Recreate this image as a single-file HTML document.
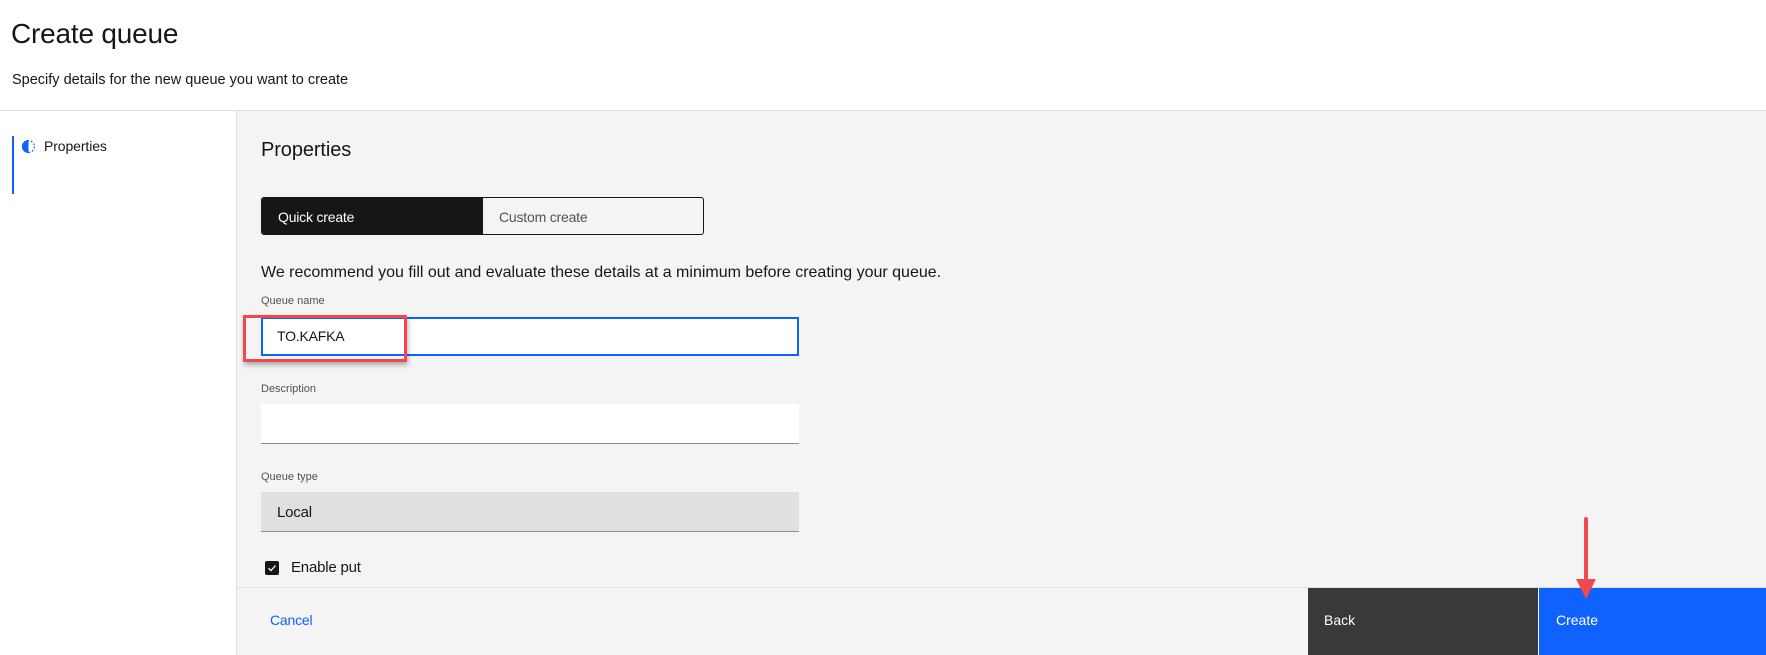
<!DOCTYPE html>
<html><head><meta charset="utf-8"><style>
*{box-sizing:border-box;margin:0;padding:0}
body{width:1766px;height:655px;overflow:hidden;background:#fff;font-family:"Liberation Sans",sans-serif;color:#161616;position:relative}
.a{position:absolute;white-space:nowrap}
</style></head><body>
<div class="a" style="left:11px;top:18px;font-size:28px;color:#161616;letter-spacing:-0.2px">Create queue</div>
<div class="a" style="left:12px;top:72px;font-size:14.5px;letter-spacing:0px">Specify details for the new queue you want to create</div>
<div class="a" style="left:0;top:110px;width:1766px;height:1px;background:#e0e0e0"></div>
<div class="a" style="left:236px;top:111px;width:1530px;height:544px;background:#f4f4f4;border-left:1px solid #e0e0e0"></div>
<div class="a" style="left:12px;top:136px;width:2px;height:58px;background:#0f62fe"></div>
<svg class="a" style="left:21px;top:139px" width="15" height="15" viewBox="0 0 16 16"><path d="M8 1A7 7 0 0 0 8 15Z" fill="#0f62fe"/><circle cx="8" cy="8" r="6.3" fill="none" stroke="#0f62fe" stroke-width="1.3" stroke-dasharray="2 2"/></svg>
<div class="a" style="left:44px;top:138px;font-size:14px;letter-spacing:-0.1px">Properties</div>
<div class="a" style="left:261px;top:139px;font-size:20px;letter-spacing:-0.1px">Properties</div>
<div class="a" style="left:261px;top:197px;width:443px;height:38px;border:1px solid #161616;border-radius:3px;background:#f4f4f4;overflow:hidden">
<div class="a" style="left:0;top:0;width:221px;height:38px;background:#161616"></div>
<div class="a" style="left:16px;top:11px;font-size:14px;color:#fff;letter-spacing:-0.2px">Quick create</div>
<div class="a" style="left:237px;top:11px;font-size:14px;color:#525252;letter-spacing:-0.2px">Custom create</div>
</div>
<div class="a" style="left:261px;top:264px;font-size:16px;letter-spacing:0px">We recommend you fill out and evaluate these details at a minimum before creating your queue.</div>
<div class="a" style="left:261px;top:295px;font-size:11px;color:#525252">Queue name</div>
<div class="a" style="left:261px;top:317px;width:538px;height:39px;background:#fff;border:2px solid #0f62fe"></div>
<div class="a" style="left:277px;top:328px;font-size:14px;letter-spacing:-0.2px">TO.KAFKA</div>
<div class="a" style="left:243px;top:315px;width:164px;height:47px;border:3px solid #f0484c;box-shadow:1px 3px 5px rgba(0,0,0,.3)"></div>
<div class="a" style="left:261px;top:383px;font-size:11px;color:#525252">Description</div>
<div class="a" style="left:261px;top:404px;width:538px;height:40px;background:#fff;border-bottom:1px solid #8d8d8d"></div>
<div class="a" style="left:261px;top:471px;font-size:11px;color:#525252">Queue type</div>
<div class="a" style="left:261px;top:492px;width:538px;height:40px;background:#e0e0e0;border-bottom:1px solid #8d8d8d"></div>
<div class="a" style="left:277px;top:504px;font-size:15px;letter-spacing:-0.2px">Local</div>
<div class="a" style="left:265px;top:561px;width:14px;height:14px;background:#161616;border-radius:2px"></div>
<svg class="a" style="left:265px;top:561px" width="14" height="14" viewBox="0 0 14 14"><path d="M3.5 7.2L6 9.6L10.5 4.5" fill="none" stroke="#fff" stroke-width="1.3"/></svg>
<div class="a" style="left:291px;top:559px;font-size:15px;letter-spacing:-0.2px">Enable put</div>
<div class="a" style="left:237px;top:587px;width:1529px;height:1px;background:#e0e0e0"></div>
<div class="a" style="left:270px;top:612px;font-size:14px;color:#0f62fe;letter-spacing:-0.2px">Cancel</div>
<div class="a" style="left:1308px;top:588px;width:230px;height:67px;background:#393939"></div>
<div class="a" style="left:1324px;top:612px;font-size:14px;color:#fff">Back</div>
<div class="a" style="left:1539px;top:588px;width:227px;height:67px;background:#0f62fe"></div>
<div class="a" style="left:1556px;top:612px;font-size:14px;color:#fff">Create</div>
<svg class="a" style="left:1572px;top:515px" width="28" height="90" viewBox="0 0 28 90"><path d="M14 4V70" stroke="#f0484c" stroke-width="4" stroke-linecap="round"/><path d="M4 64L24 64L14 84Z" fill="#f0484c"/></svg>
</body></html>
